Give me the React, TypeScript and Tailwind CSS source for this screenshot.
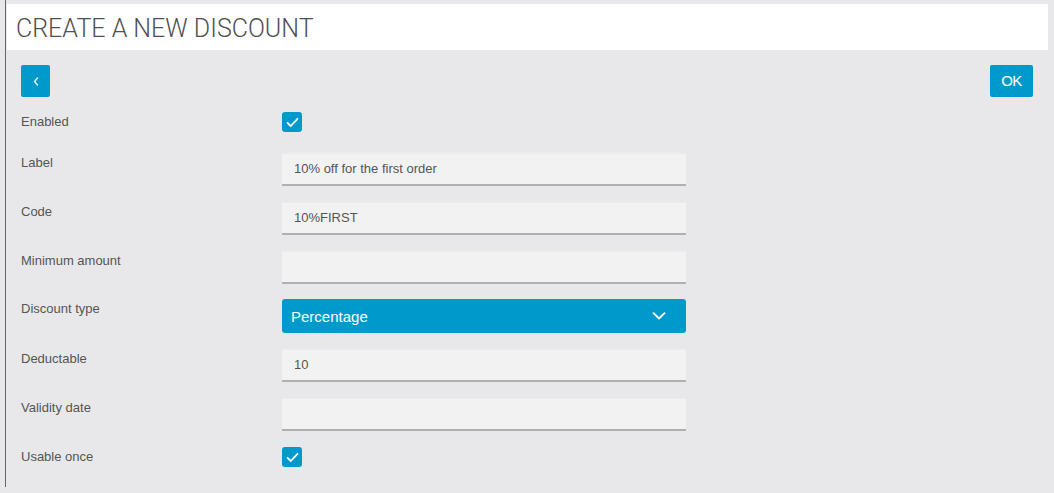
import React from "react";

const font = { fontFamily: '"Liberation Sans", Arial, sans-serif' };
const titleFont = { fontFamily: 'Roboto, "Liberation Sans", Arial, sans-serif' };

function Check() {
  return (
    <div className="w-[20px] h-[20px] rounded-[3px] bg-[#0099cb] flex items-center justify-center">
      <svg width="13" height="11" viewBox="0 0 13 11" fill="none">
        <path d="M1.5 5.8 L4.8 9 L11.5 1.8" stroke="white" strokeWidth="1.8" strokeLinecap="round" strokeLinejoin="round" />
      </svg>
    </div>
  );
}

function Input({ value }: { value?: string }) {
  return (
    <div className="w-[404px] h-[33px] bg-[#f2f2f2] border-t border-t-[#ececec] border-b-2 border-b-[#b0b0b0] flex items-center px-[12px] text-[13px] text-[#555]">
      {value}
    </div>
  );
}

function Row({ label, h, children }: { label: string; h: string; children: React.ReactNode }) {
  return (
    <div className={`flex ${h}`}>
      <div className="w-[261px] leading-[20px] text-[13px] text-[#555]">{label}</div>
      <div>{children}</div>
    </div>
  );
}

export default function App() {
  return (
    <div className="w-[1054px] h-[493px] bg-[#e8e8ea] pl-[5px]" style={font}>
      <div className="h-[487px] border-l border-[#666] pt-[4px]">
        <div className="ml-[1px] mr-[6px] h-[46px] bg-white flex items-center pl-[9px]">
          <h1 className="text-[25px] font-light text-[#505050] pt-[4px]" style={titleFont}>CREATE A NEW DISCOUNT</h1>
        </div>
        <div className="pl-[15px] pr-[21px] pt-[15px]">
          <div className="flex justify-between h-[32px]">
            <button className="w-[29px] h-[32px] rounded-[2px] bg-[#0099cb] flex items-center justify-center">
              <svg width="6" height="9" viewBox="0 0 6 9" fill="none">
                <path d="M4.5 1 L1.5 4.5 L4.5 8" stroke="white" strokeWidth="1.3" strokeLinecap="round" strokeLinejoin="round" />
              </svg>
            </button>
            <button className="w-[43px] h-[32px] rounded-[2px] bg-[#0099cb] text-white text-[15px] flex items-center justify-center tracking-[-0.5px]">
              OK
            </button>
          </div>
          <div className="pt-[15px]">
            <Row label="Enabled" h="h-[41px]"><Check /></Row>
            <Row label="Label" h="h-[49px]"><Input value="10% off for the first order" /></Row>
            <Row label="Code" h="h-[49px]"><Input value="10%FIRST" /></Row>
            <Row label="Minimum amount" h="h-[48px]"><Input /></Row>
            <Row label="Discount type" h="h-[50px]">
              <div className="w-[404px] h-[34px] rounded-[3px] bg-[#0099cb] flex items-center justify-between pl-[9px] pr-[20px] text-white text-[15px]">
                <span className="pt-[3px]">Percentage</span>
                <svg width="14" height="8" viewBox="0 0 14 8" fill="none">
                  <path d="M1.5 1.2 L7 6.5 L12.5 1.2" stroke="white" strokeWidth="1.8" strokeLinecap="round" strokeLinejoin="round" />
                </svg>
              </div>
            </Row>
            <Row label="Deductable" h="h-[49px]"><Input value="10" /></Row>
            <Row label="Validity date" h="h-[49px]"><Input /></Row>
            <Row label="Usable once" h="h-[30px]"><Check /></Row>
          </div>
        </div>
      </div>
    </div>
  );
}
